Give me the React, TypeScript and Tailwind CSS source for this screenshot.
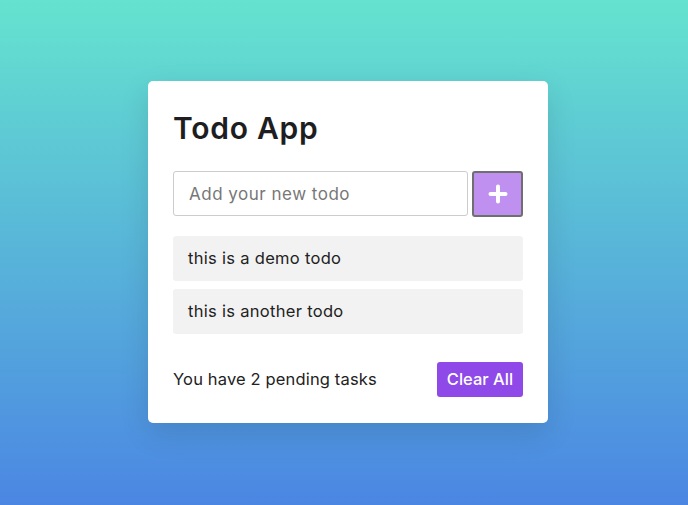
const todos = ["this is a demo todo", "this is another todo"];

export default function App() {
  return (
    <main
      className="flex min-h-screen h-[505px] items-center justify-center bg-[linear-gradient(to_bottom,#65e3cf_0%,#4b86e3_100%)] pb-[1px] pl-[8px]"
      style={{ fontFamily: "Inter, 'Noto Sans', sans-serif" }}
    >
      <div className="w-[400px] rounded-[5px] bg-white p-[25px] pb-[26px] shadow-[0_10px_30px_rgba(0,0,0,0.12)]">
        <h1 className="text-[30px] font-semibold leading-[45px] tracking-[0.75px] text-[#1e1e22]">Todo App</h1>

        <div className="mt-[20px] flex gap-[4px]">
          <input
            type="text"
            placeholder="Add your new todo"
            className="h-[45px] w-[295px] rounded-[3px] border border-[#cccccc] px-[15px] text-[17px] tracking-[0.5px] text-[#333] outline-none placeholder:text-[#777]"
          />
          <button className="flex h-[46px] w-[52px] items-center justify-center rounded-[3px] border-2 border-[#6f6f6f] bg-[#bf90f0]">
            <svg width="20" height="20" viewBox="0 0 20 20">
              <path d="M10 2.5v15M2.5 10h15" stroke="white" strokeWidth="4" strokeLinecap="round" />
            </svg>
          </button>
        </div>

        <ul className="mt-[19px] flex flex-col gap-[8px]">
          {todos.map((t) => (
            <li key={t} className="flex h-[45px] items-center rounded-[3px] bg-[#f2f2f2] px-[15px] text-[16.5px] tracking-[0.3px] text-[#222]">
              {t}
            </li>
          ))}
        </ul>

        <div className="mt-[28px] flex items-center justify-between">
          <span className="text-[16.5px] tracking-[0.15px] text-[#222]">You have 2 pending tasks</span>
          <button className="h-[35px] w-[86px] rounded-[3px] bg-[#8e49e8] text-[16.5px] font-medium text-white">
            Clear All
          </button>
        </div>
      </div>
    </main>
  );
}
